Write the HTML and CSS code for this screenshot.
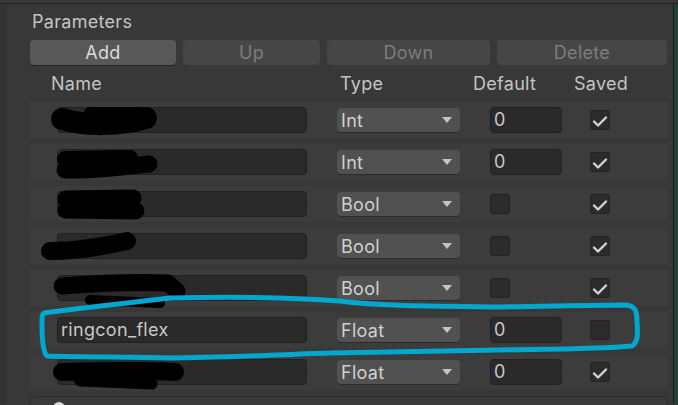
FILE: index.html
```html
<!DOCTYPE html>
<html>
<head>
<meta charset="utf-8">
<link rel="stylesheet" href="styles.css">
</head>
<body>
<div class="window">
  <div class="topstrip"></div>
  <div class="main">
    <div class="leftstrip"></div>
    <div class="content">
      <div class="title">Parameters</div>
      <div class="buttons">
        <div class="btn active">Add</div>
        <div class="btn">Up</div>
        <div class="btn">Down</div>
        <div class="btn">Delete</div>
      </div>
      <div class="header">
        <span>Name</span><span>Type</span><span>Default</span><span>Saved</span>
      </div>
      <div class="rows">
        <div class="row">
          <div class="field"></div>
          <div class="dropdown"><span>Int</span><i class="arrow"></i></div>
          <div class="field num">0</div>
          <div class="check"><svg viewBox="0 0 20 20"><path d="M4 11.5 L8 15.5 L16 7.5"/></svg></div>
        </div>
        <div class="row">
          <div class="field"></div>
          <div class="dropdown"><span>Int</span><i class="arrow"></i></div>
          <div class="field num">0</div>
          <div class="check"><svg viewBox="0 0 20 20"><path d="M4 11.5 L8 15.5 L16 7.5"/></svg></div>
        </div>
        <div class="row">
          <div class="field"></div>
          <div class="dropdown"><span>Bool</span><i class="arrow"></i></div>
          <div class="cell"><div class="check"></div></div>
          <div class="check"><svg viewBox="0 0 20 20"><path d="M4 11.5 L8 15.5 L16 7.5"/></svg></div>
        </div>
        <div class="row">
          <div class="field"></div>
          <div class="dropdown"><span>Bool</span><i class="arrow"></i></div>
          <div class="cell"><div class="check"></div></div>
          <div class="check"><svg viewBox="0 0 20 20"><path d="M4 11.5 L8 15.5 L16 7.5"/></svg></div>
        </div>
        <div class="row">
          <div class="field"></div>
          <div class="dropdown"><span>Bool</span><i class="arrow"></i></div>
          <div class="cell"><div class="check"></div></div>
          <div class="check"><svg viewBox="0 0 20 20"><path d="M4 11.5 L8 15.5 L16 7.5"/></svg></div>
        </div>
        <div class="row">
          <div class="field name">ringcon_flex</div>
          <div class="dropdown"><span>Float</span><i class="arrow"></i></div>
          <div class="field num">0</div>
          <div class="check"></div>
        </div>
        <div class="row">
          <div class="field"></div>
          <div class="dropdown"><span>Float</span><i class="arrow"></i></div>
          <div class="field num">0</div>
          <div class="check"><svg viewBox="0 0 20 20"><path d="M4 11.5 L8 15.5 L16 7.5"/></svg></div>
        </div>
      </div>
      <div class="nextbox"><i class="dot"></i></div>
    </div>
    <div class="rightline"></div>
    <div class="greenstrip"></div>
  </div>
</div>
<svg class="annot" width="678" height="405" viewBox="0 0 678 405">
  <g class="scribble">
    <path d="M62 119 C 85 126, 120 126, 146 118" stroke-width="22"/>
    <path d="M90 113 L 140 113" stroke-width="12"/>
    <path d="M65 159 L 130 158" stroke-width="16"/>
    <path d="M65 170 C 95 171, 125 167, 149 164" stroke-width="17"/>
    <path d="M66 199 L 133 198" stroke-width="17"/>
    <path d="M66 210 L 136 211" stroke-width="17"/>
    <path d="M50 251 C 80 251, 105 246, 127 241" stroke-width="18"/>
    <path d="M62 286 C 100 283, 140 282, 168 283 L 177 291" stroke-width="17"/>
    <path d="M90 300 L 160 303" stroke-width="10"/>
    <path d="M62 372 C 100 371, 140 370, 175 372" stroke-width="18"/>
    <path d="M80 381 L 152 384" stroke-width="11"/>
  </g>
  <path class="blue" d="M44 313 C 70 309, 110 305, 170 298 C 250 296, 300 298, 340 301 C 380 306, 420 306, 500 307 C 560 306, 600 305, 626 305 C 636 306, 637 312, 637 322 C 638 334, 638 342, 632 346 C 600 349, 560 349, 500 350 C 440 351, 380 352, 330 353 C 270 355, 220 358, 170 358 C 120 357, 80 357, 47 356 C 43 352, 42 340, 42 325 C 42 318, 42 314, 44 313 Z"/>
</svg>
</body>
</html>
```
FILE: styles.css
```css
* { box-sizing: border-box; }
html, body {
  margin: 0;
  width: 678px;
  height: 405px;
  overflow: hidden;
  background: #383838;
  font-family: Inter, "Noto Sans", sans-serif;
  font-size: 18px;
  letter-spacing: 0.3px;
  color: #c4c4c4;
}
.window { position: relative; width: 678px; height: 405px; }
.topstrip {
  height: 4px;
  background: #383838;
  border-bottom: 1px solid #232323;
}
.main { display: flex; height: 400px; }
.leftstrip { width: 7px; background: #323232; }
.content { flex: 1; padding: 0 5px 0 23px; background: #383838; }
.rightline { width: 1px; background: #1c1c1c; }
.greenstrip { width: 4px; background: #1f4236; }

.title {
  height: 36px;
  padding-left: 2px;
  padding-top: 7px;
  line-height: 22px;
  color: #c4c4c4;
}
.buttons {
  display: grid;
  grid-template-columns: 146px 137px 163px 170px;
  column-gap: 7px;
  height: 25px;
}
.btn {
  background: #464646;
  border-radius: 4px;
  color: #7d7d7d;
  text-align: center;
  line-height: 25px;
}
.btn.active {
  background: #585858;
  color: #dadada;
  box-shadow: 0 1px 0 #252525;
}
.header {
  display: grid;
  grid-template-columns: 289px 133px 101px auto;
  padding-left: 21px;
  height: 37px;
  align-items: center;
}
.rows { display: flex; flex-direction: column; gap: 6px; }
.row {
  height: 36px;
  background: #3c3c3c;
  display: grid;
  grid-template-columns: 250px 123px 72px 20px;
  column-gap: 30px;
  padding-left: 27px;
  align-items: center;
}
.field {
  height: 26px;
  background: #2a2a2a;
  border: 1px solid #212121;
  border-radius: 4px;
  line-height: 24px;
  padding-left: 3px;
  color: #c8c8c8;
}
.dropdown {
  height: 24px;
  background: #515151;
  border-radius: 4px;
  display: flex;
  align-items: center;
  justify-content: space-between;
  padding: 0 8px 0 4px;
  color: #d0d0d0;
  box-shadow: 0 1px 0 #2a2a2a;
}
.arrow {
  width: 0;
  height: 0;
  border-left: 5px solid transparent;
  border-right: 5px solid transparent;
  border-top: 6px solid #c4c4c4;
}
.cell { display: flex; }
.check {
  width: 20px;
  height: 20px;
  background: #2b2b2b;
  border: 1px solid #232323;
  border-radius: 3px;
  position: relative;
}
.row > .check { margin-left: -2px; }
.check svg {
  position: absolute;
  left: -1px;
  top: -1px;
  width: 20px;
  height: 20px;
  fill: none;
  stroke: #d4d4d4;
  stroke-width: 2.4;
  stroke-linecap: round;
  stroke-linejoin: round;
}
.nextbox {
  margin-top: 6px;
  height: 20px;
  border: 1px solid #2b2b2b;
  border-radius: 6px 6px 0 0;
  background: #3a3a3a;
  position: relative;
}
.dot {
  position: absolute;
  left: 22px;
  top: 5px;
  width: 12px;
  height: 12px;
  border-radius: 50%;
  background: #d8d8d8;
}
.annot { position: absolute; left: 0; top: 0; pointer-events: none; }
.scribble path {
  fill: none;
  stroke: #000;
  stroke-linecap: round;
  stroke-linejoin: round;
}
.blue {
  fill: none;
  stroke: #00a8cf;
  stroke-width: 5;
  stroke-linejoin: round;
}
```
